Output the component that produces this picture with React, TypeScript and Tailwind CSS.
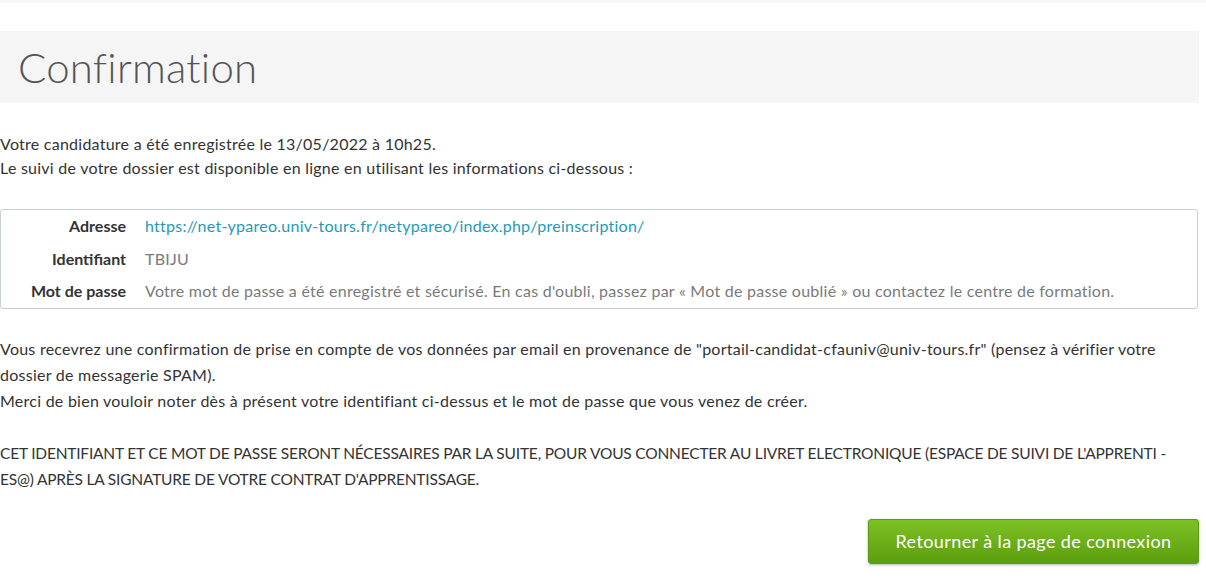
import React from "react";

// ─── Données ──────────────────────────────────────────────────────────────────

const rows = [
  {
    label: "Adresse",
    value: "https://net-ypareo.univ-tours.fr/netypareo/index.php/preinscription/",
    link: true,
  },
  { label: "Identifiant", value: "TBIJU", link: false },
  {
    label: "Mot de passe",
    value:
      "Votre mot de passe a été enregistré et sécurisé. En cas d'oubli, passez par « Mot de passe oublié » ou contactez le centre de formation.",
    link: false,
  },
];

// ─── Page ─────────────────────────────────────────────────────────────────────

export default function App() {
  return (
    <div className="min-h-[587px] w-[1206px] bg-white text-[16px] leading-[24px] tracking-[0.25px] text-[#333] font-['Lato','Open_Sans',sans-serif]">
      <div className="h-[3px] bg-[#f7f7f7]" />

      <div className="w-[1199px] pt-[28px]">
        {/* Titre */}
        <div className="bg-[#f5f5f5] h-[72px] pl-[18px] flex items-center">
          <h1 className="text-[42px] font-light text-[#555] leading-none tracking-[0.2px]">Confirmation</h1>
        </div>

        {/* Intro */}
        <p className="mt-[29px]">
          Votre candidature a été enregistrée le 13/05/2022 à 10h25.
          <br />
          Le suivi de votre dossier est disponible en ligne en utilisant les informations ci-dessous :
        </p>

        {/* Informations de connexion */}
        <div className="mt-[29px] w-[1198px] border border-[#c9d0d0] rounded-[3px]">
          {rows.map((row) => (
            <div key={row.label} className="flex h-[32.5px] items-center">
              <div className="w-[125px] shrink-0 text-right font-bold tracking-normal">{row.label}</div>
              <div className={`pl-[19px] ${row.link ? "text-[#1e9bb5]" : "text-[#7a7a7a]"}`}>
                {row.value}
              </div>
            </div>
          ))}
        </div>

        {/* Message */}
        <div className="mt-[27px] leading-[26px]">
          <p>
            Vous recevrez une confirmation de prise en compte de vos données par email en provenance de "portail-candidat-cfauniv@univ-tours.fr" (pensez à vérifier votre dossier de messagerie SPAM).
            <br />
            Merci de bien vouloir noter dès à présent votre identifiant ci-dessus et le mot de passe que vous venez de créer.
          </p>
          <p className="mt-[26px] text-[15.5px] tracking-[-0.2px]">
            CET IDENTIFIANT ET CE MOT DE PASSE SERONT NÉCESSAIRES PAR LA SUITE, POUR VOUS CONNECTER AU LIVRET ELECTRONIQUE (ESPACE DE SUIVI DE L'APPRENTI - ES@) APRÈS LA SIGNATURE DE VOTRE CONTRAT D'APPRENTISSAGE.
          </p>
        </div>

        {/* Action */}
        <div className="mt-[27px] flex justify-end">
          <button className="w-[331px] h-[45px] rounded-[3px] border border-[#5b9a12] bg-gradient-to-b from-[#7dc125] to-[#5c9e0c] text-white text-[18px] tracking-[0.4px] shadow-[0_1px_3px_rgba(0,0,0,0.3)]">
            Retourner à la page de connexion
          </button>
        </div>
      </div>
    </div>
  );
}
